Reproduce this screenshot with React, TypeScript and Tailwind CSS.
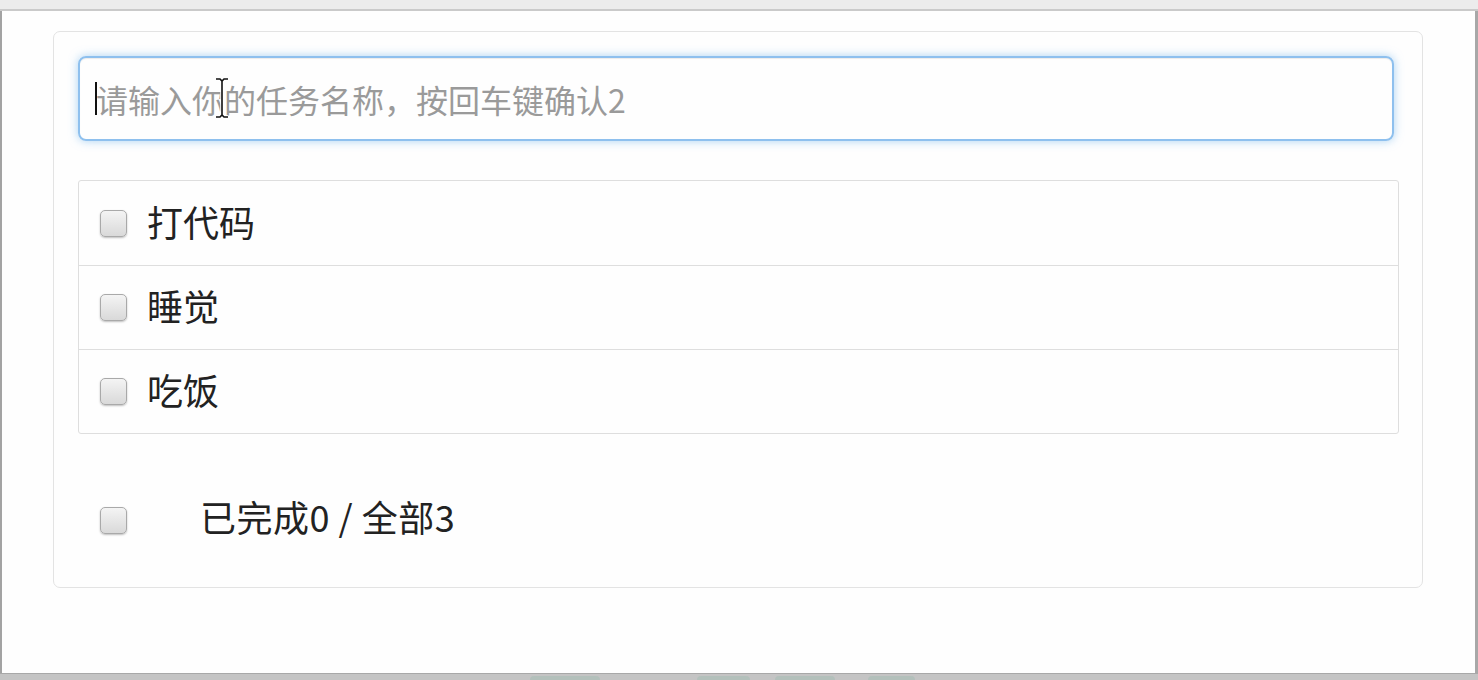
import { useState } from 'react';

const font = { fontFamily: '"Noto Sans CJK SC", "Microsoft YaHei", sans-serif' };

const Box = () => (
  <span className="inline-block w-[27px] h-[27px] shrink-0 rounded-[5px] border border-[#a9a9a9] bg-gradient-to-b from-[#f4f4f4] to-[#d9d9d9] shadow-[0_1px_2px_rgba(0,0,0,0.25)]" />
);

const todos = ['打代码', '睡觉', '吃饭'];

const App = () => {
  const [value, setValue] = useState('');

  return (
    <div className="w-[1478px] h-[680px] bg-[#bdbdbd] flex flex-col overflow-hidden" style={font}>
      {/* window top edge */}
      <div className="h-[11px] bg-[#ececec] border-b-2 border-[#cacaca]" />

      <div className="flex-1 flex">
        <div className="w-[2px] bg-[#a3a3a3]" />
        <div className="flex-1 bg-[#fefefe] pt-[20px] pl-[51px] pr-[52px]">
          {/* card */}
          <div className="border border-[#e3e3e3] rounded-[7px] pt-[24px] pl-[24px] pr-[23px] pb-[32px]">
            <div className="relative mr-[5px]">
              <input
                value={value}
                onChange={(e) => setValue(e.target.value)}
                placeholder="请输入你的任务名称，按回车键确认2"
                className="w-full h-[85px] rounded-[8px] border-2 border-[#8ec0ee] pl-[16px] text-[32px] text-[#333] placeholder:text-[#9a9a9a] outline-none caret-transparent shadow-[inset_0_1px_1px_rgba(0,0,0,0.075),0_0_10px_rgba(102,175,233,0.55)]"
                style={font}
              />
              {/* text caret */}
              <span className="absolute left-[17px] top-[26px] w-[2px] h-[33px] bg-[#111]" />
              {/* mouse I-beam */}
              <svg className="absolute left-[137px] top-[22px]" width="14" height="40" viewBox="0 0 14 40">
                <path d="M1 1h4l2 2 2-2h4M7 3v34M1 39h4l2-2 2 2h4" fill="none" stroke="#fff" strokeWidth="3.5" />
                <path d="M1 1h4l2 2 2-2h4M7 3v34M1 39h4l2-2 2 2h4" fill="none" stroke="#111" strokeWidth="1.6" />
              </svg>
            </div>

            <ul className="mt-[39px] border border-[#dedede] rounded-[3px]">
              {todos.map((t, i) => (
                <li
                  key={t}
                  className={`h-[84px] flex items-center gap-[20px] pl-[21px] text-[36px] text-[#222] ${i > 0 ? 'border-t border-[#dedede]' : ''}`}
                >
                  <Box />
                  <span className="-mt-[5px]">{t}</span>
                </li>
              ))}
            </ul>

            <div className="mt-[51px] h-[70px] flex items-center pl-[22px] text-[36px] text-[#222]">
              <Box />
              <span className="ml-[73px] -mt-[8px] tracking-[0.5px]">已完成0 / 全部3</span>
            </div>
          </div>
        </div>
        <div className="w-[3px] bg-[#a8a8a8]" />
      </div>

      {/* bottom edge with watermark bits */}
      <div className="h-[7px] bg-[#c4c4c4] border-t border-[#a8a8a8] flex items-end pl-[530px]">
        <span className="w-[70px] h-[4px] rounded-t-[10px] bg-[#b3c0bb]" />
        <span className="ml-[97px] w-[53px] h-[4px] rounded-t-[4px] bg-[#b3c0bb]" />
        <span className="ml-[25px] w-[60px] h-[4px] rounded-t-[10px] bg-[#b3c0bb]" />
        <span className="ml-[33px] w-[47px] h-[4px] rounded-t-[10px] bg-[#b3c0bb]" />
      </div>
    </div>
  );
};

export default App;
